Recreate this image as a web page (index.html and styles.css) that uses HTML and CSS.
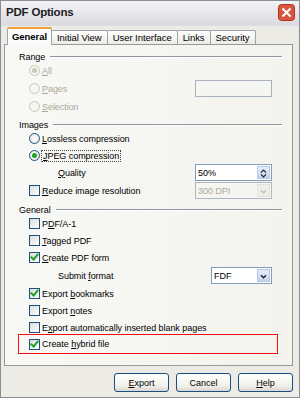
FILE: index.html
```html
<!DOCTYPE html>
<html lang="en">
<head>
  <meta charset="UTF-8" />
  <title>PDF Options</title>
  <link rel="stylesheet" href="styles.css">
</head>
<body>
  <div class="window">
    <div class="titlebar">
      <span class="title">PDF Options</span>
      <span class="close">
        <svg width="17" height="17" viewBox="0 0 17 17">
          <rect x="0.5" y="0.5" width="16" height="16" rx="3" fill="#d8563f" stroke="#b0321e"/>
          <path d="M4.5 4.5 L12.5 12.5 M12.5 4.5 L4.5 12.5" stroke="#fff" stroke-width="2"/>
        </svg>
      </span>
    </div>

    <div class="client">
      <div class="tabs">
        <div class="tab active">General</div>
        <div class="tab">Initial View</div>
        <div class="tab">User Interface</div>
        <div class="tab">Links</div>
        <div class="tab">Security</div>
      </div>

      <div class="panel">
        <div class="heading"><span>Range</span></div>
        <div class="row disabled"><span class="radio checked"></span><span class="label"><u>A</u>ll</span></div>
        <div class="row disabled tall"><span class="radio"></span><span class="label"><u>P</u>ages</span><span class="field"></span></div>
        <div class="row disabled"><span class="radio"></span><span class="label"><u>S</u>election</span></div>

        <div class="heading"><span>Images</span></div>
        <div class="row"><span class="radio"></span><span class="label"><u>L</u>ossless compression</span></div>
        <div class="row"><span class="radio checked"></span><span class="label"><span class="focus"><u>J</u>PEG compression</span></span></div>
        <div class="row"><span class="label sub"><u>Q</u>uality</span><span class="field"><span class="value">50%</span><span class="spin"><svg width="13" height="13" viewBox="0 0 13 13"><path d="M3.5 5.5 L6.5 2.5 L9.5 5.5 M3.5 7.5 L6.5 10.5 L9.5 7.5" fill="none" stroke="#222" stroke-width="1.4"/></svg></span></span></div>
        <div class="row tall"><span class="check"></span><span class="label"><u>R</u>educe image resolution</span><span class="field disabled-field"><span class="value">300 DPI</span><span class="drop"><svg width="13" height="13" viewBox="0 0 13 13"><path d="M3.5 5 L6.5 8 L9.5 5" fill="none" stroke="#c4c3bc" stroke-width="1.6"/></svg></span></span></div>

        <div class="heading"><span>General</span></div>
        <div class="row"><span class="check"></span><span class="label">P<u>D</u>F/A-1</span></div>
        <div class="row"><span class="check"></span><span class="label"><u>T</u>agged PDF</span></div>
        <div class="row"><span class="check checked"></span><span class="label"><u>C</u>reate PDF form</span></div>
        <div class="row tall"><span class="label sub">Submit <u>f</u>ormat</span><span class="field narrow"><span class="value">FDF</span><span class="drop"><svg width="13" height="13" viewBox="0 0 13 13"><path d="M3.5 5 L6.5 8 L9.5 5" fill="none" stroke="#222" stroke-width="1.6"/></svg></span></span></div>
        <div class="row"><span class="check checked"></span><span class="label">Export <u>b</u>ookmarks</span></div>
        <div class="row"><span class="check"></span><span class="label">Export <u>n</u>otes</span></div>
        <div class="row"><span class="check"></span><span class="label">E<u>x</u>port automatically inserted blank pages</span></div>
        <div class="row highlight"><span class="check checked"></span><span class="label">Create <u>h</u>ybrid file</span></div>
      </div>

      <div class="buttons">
        <button><u>E</u>xport</button>
        <button>Cancel</button>
        <button><u>H</u>elp</button>
      </div>
    </div>
  </div>
</body>
</html>
```

FILE: styles.css
```css
html, body { margin: 0; padding: 0; background: #fff; }
body { font-family: "Liberation Sans", Arial, sans-serif; font-size: 9px; letter-spacing: -0.05px; color: #000; }

.window { width: 298px; height: 396px; border: 1px solid #8d8d96; background: #ecebe5; }

.titlebar { height: 25px; display: flex; align-items: center; justify-content: space-between; padding: 0 3px 0 5px;
  background: linear-gradient(#f4f4f6, #e4e4e8 60%, #dadade); }
.title { font-weight: bold; font-size: 11.5px; color: #1c1c24; letter-spacing: -0.2px; margin-top: -3px; }
.close { display: flex; margin-top: -2px; margin-right: 1px; }

.client { padding: 0 6px 0 3px; }

.tabs { display: flex; align-items: flex-end; height: 18px; padding-left: 3px; font-size: 9.5px; }
.tab { height: 13px; line-height: 13px; padding: 0 5px; border: 1px solid #9ba5a6; border-bottom: none; border-radius: 2px 2px 0 0;
  background: linear-gradient(#fefefe, #ecebe6); margin-right: -1px; position: relative; }
.tab.active { height: 16px; line-height: 16px; padding: 0 4px; font-weight: bold; background: #fcfcfe; border-top: 2px solid #f0a030; z-index: 1; margin-bottom: -1px; }

.panel { height: 315px; border: 1px solid #919b9c; background: linear-gradient(90deg, #f8f8f6, #f4f3ee); padding: 5px 10px 0 14px; }

.heading { display: flex; align-items: center; height: 14px; margin-bottom: -2px; }
.heading span { padding-right: 5px; }
.heading::after { content: ""; flex: 1; border-top: 1px solid #8e939c; border-bottom: 1px solid #fff; }
.row + .heading { margin-top: 3px; }

.row { display: flex; align-items: center; height: 17px; padding-left: 10px; }
.row.tall { height: 19px; }
.label { flex: 1; padding-left: 2px; white-space: nowrap; }
.label.sub { padding-left: 29px; }
.disabled .label { color: #aca899; }
.focus { outline: 1px dotted #444; padding: 0 1px; }

.radio { width: 9px; height: 9px; border: 1px solid #1c5180; border-radius: 50%; background: radial-gradient(#fff, #e2e2dc); position: relative; flex: none; }
.disabled .radio { border-color: #c9c7ba; background: #f6f6f2; }
.radio.checked::after { content: ""; position: absolute; left: 2px; top: 2px; width: 5px; height: 5px; border-radius: 50%; background: #21a121; }
.disabled .radio.checked::after { background: #cac8bb; }

.check { width: 9px; height: 9px; border: 1px solid #1c5180; background: linear-gradient(135deg, #dcdcd7, #fff); position: relative; flex: none; }
.check.checked::after { content: ""; position: absolute; left: 2px; top: -1px; width: 3px; height: 6px; border: solid #21a121; border-width: 0 2px 2px 0; transform: rotate(40deg); }

.field { width: 75px; height: 15px; margin-right: 10px; border: 1px solid #7f9db9; background: #fff; display: flex; align-items: center; flex: none; }
.disabled .field { border-color: #a9b3bd; background: #f5f5f1; }
.field.narrow { width: 59px; }
.value { flex: 1; padding-left: 2px; }
.disabled-field { border-color: #aeb8c2; background: #f5f5f1; color: #aca899; }
.spin, .drop { width: 13px; height: 13px; margin-right: 1px; display: flex; border: 1px solid #b7c5e3; background: linear-gradient(#e6eefc, #c6d3f0); box-sizing: border-box; }
.disabled-field .drop { border-color: #e2e1da; background: #efeee8; }

.highlight { outline: 1px solid #f01010; outline-offset: -1px; margin: -2px 4px 0 -1px; padding-left: 11px; height: 20px; }

.buttons { display: flex; justify-content: flex-end; gap: 7px; padding: 7px 0 0; }
button { width: 55px; height: 19px; padding: 0; font: inherit; color: #000; border: 1px solid #1b4e84; border-radius: 3px;
  background: linear-gradient(#ffffff, #f1f0ea 70%, #d8d5cc); }
```
